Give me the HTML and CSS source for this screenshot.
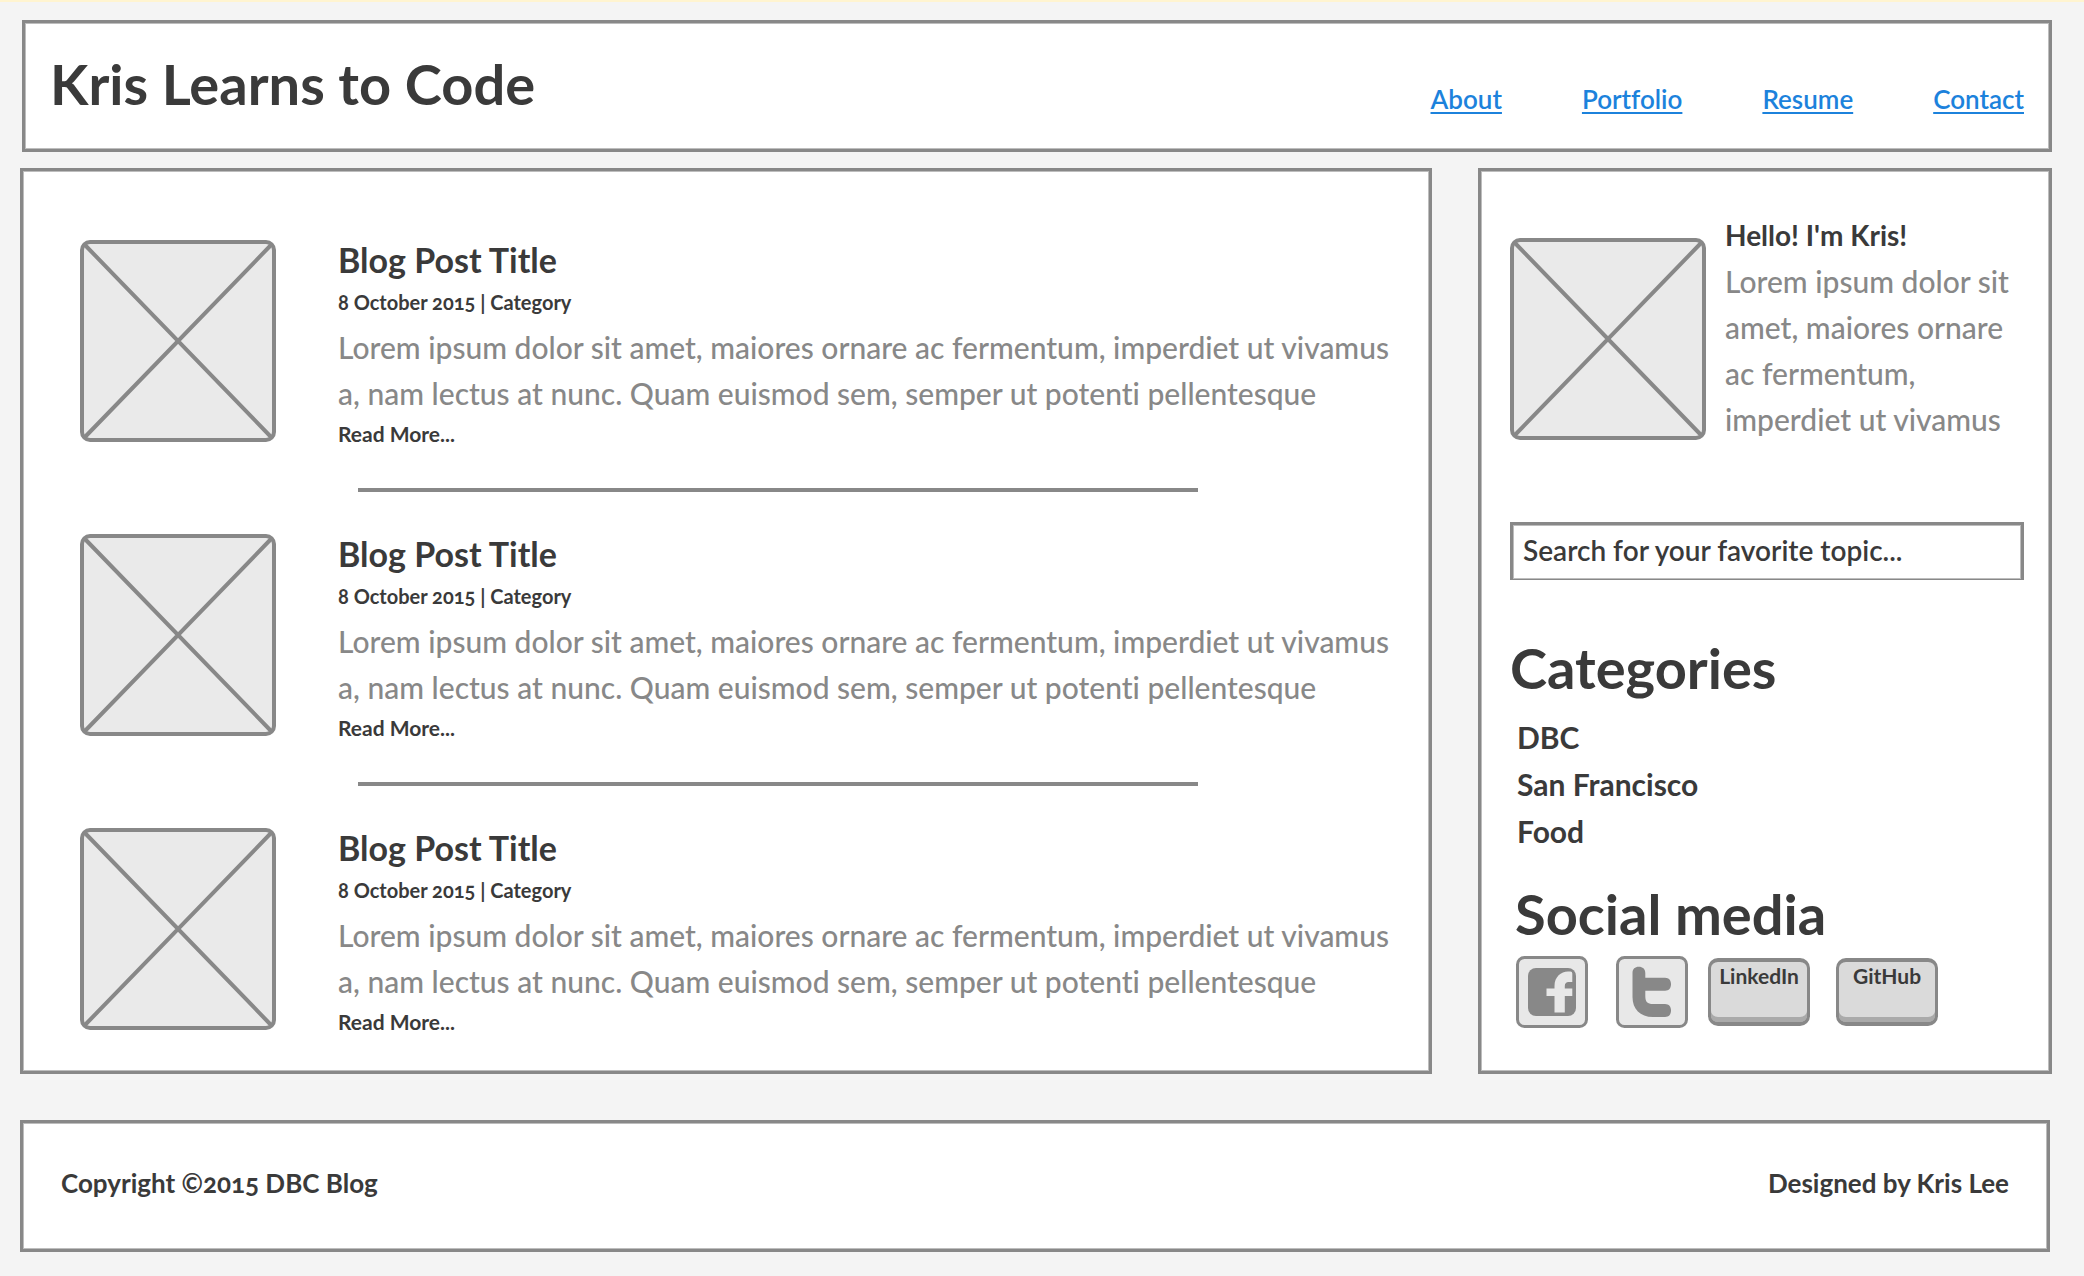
FILE: index.html
```html
<!DOCTYPE html>
<html lang="en">
<head>
<meta charset="utf-8">
<meta name="viewport" content="width=device-width, initial-scale=1">
<title>Kris Learns to Code</title>
<link rel="stylesheet" href="styles.css">
</head>
<body>
<div class="page">
  <header class="panel site-header">
    <h1 class="site-title">Kris Learns to Code</h1>
    <nav class="site-nav">
      <a href="#about">About</a>
      <a href="#portfolio">Portfolio</a>
      <a href="#resume">Resume</a>
      <a href="#contact">Contact</a>
    </nav>
  </header>

  <div class="columns">
    <main class="panel posts">
      <article class="post">
        <svg class="thumb" viewBox="0 0 196 202" preserveAspectRatio="none" role="img" aria-label="Post image"><rect x="2" y="2" width="192" height="198" rx="8"/><path d="M4 4L192 198M192 4L4 198"/></svg>
        <div>
          <h2 class="post-title">Blog Post Title</h2>
          <p class="post-meta">8 October 2015 | Category</p>
          <p class="copy">Lorem ipsum dolor sit amet, maiores ornare ac fermentum, imperdiet ut vivamus a, nam lectus at nunc. Quam euismod sem, semper ut potenti pellentesque</p>
          <a class="read-more" href="#post-1">Read More...</a>
        </div>
      </article>
      <hr class="divider">
      <article class="post">
        <svg class="thumb" viewBox="0 0 196 202" preserveAspectRatio="none" role="img" aria-label="Post image"><rect x="2" y="2" width="192" height="198" rx="8"/><path d="M4 4L192 198M192 4L4 198"/></svg>
        <div>
          <h2 class="post-title">Blog Post Title</h2>
          <p class="post-meta">8 October 2015 | Category</p>
          <p class="copy">Lorem ipsum dolor sit amet, maiores ornare ac fermentum, imperdiet ut vivamus a, nam lectus at nunc. Quam euismod sem, semper ut potenti pellentesque</p>
          <a class="read-more" href="#post-2">Read More...</a>
        </div>
      </article>
      <hr class="divider">
      <article class="post">
        <svg class="thumb" viewBox="0 0 196 202" preserveAspectRatio="none" role="img" aria-label="Post image"><rect x="2" y="2" width="192" height="198" rx="8"/><path d="M4 4L192 198M192 4L4 198"/></svg>
        <div>
          <h2 class="post-title">Blog Post Title</h2>
          <p class="post-meta">8 October 2015 | Category</p>
          <p class="copy">Lorem ipsum dolor sit amet, maiores ornare ac fermentum, imperdiet ut vivamus a, nam lectus at nunc. Quam euismod sem, semper ut potenti pellentesque</p>
          <a class="read-more" href="#post-3">Read More...</a>
        </div>
      </article>
    </main>

    <aside class="panel sidebar">
      <section class="bio">
        <svg class="thumb portrait" viewBox="0 0 196 202" preserveAspectRatio="none" role="img" aria-label="Portrait of Kris"><rect x="2" y="2" width="192" height="198" rx="8"/><path d="M4 4L192 198M192 4L4 198"/></svg>
        <div>
          <h2 class="bio-title">Hello! I'm Kris!</h2>
          <p class="copy">Lorem ipsum dolor sit amet, maiores ornare ac fermentum, imperdiet ut vivamus</p>
        </div>
      </section>
      <input class="search" type="search" aria-label="Search" placeholder="Search for your favorite topic...">
      <section>
        <h2 class="side-title">Categories</h2>
        <ul class="categories">
          <li><a href="#dbc">DBC</a></li>
          <li><a href="#san-francisco">San Francisco</a></li>
          <li><a href="#food">Food</a></li>
        </ul>
      </section>
      <section>
        <h2 class="side-title social-title">Social media</h2>
        <div class="social">
          <a class="social-icon" href="#facebook" aria-label="Facebook">
            <svg viewBox="0 0 72 72"><rect class="tile" x="1.5" y="1.5" width="69" height="69" rx="7"/><rect class="mark" x="12" y="12" width="48" height="48" rx="8"/><path class="cutout" d="M38.500 56.500V40H30.500V32.500H38.500V30C38.500 21 45 15.600 52 15.600H54.500Q56.300 15.600 56.300 17.500V26H52.500Q48.800 26.300 48.800 30V32.500H56.300V40H48.800V56.500Z"/></svg>
          </a>
          <a class="social-icon twitter" href="#twitter" aria-label="Twitter">
            <svg viewBox="0 0 72 72"><rect class="tile" x="1.5" y="1.5" width="69" height="69" rx="7"/><path class="mark" d="M16.500 17C16.500 13 19 10.800 22.800 10.800S29.300 13 29.300 17V21.700H49C53 21.700 55 24.500 55 28.200S53 34.700 49 34.700H29.300V40C29.300 46 31.500 48 37 48H49C53 48 55 50.800 55 54.500S53 61 49 61H37C24 61 16.500 53 16.500 41Z"/></svg>
          </a>
          <button class="key" type="button">LinkedIn</button>
          <button class="key github" type="button">GitHub</button>
        </div>
      </section>
    </aside>
  </div>

  <footer class="panel site-footer">
    <p>Copyright ©2015 DBC Blog</p>
    <p>Designed by Kris Lee</p>
  </footer>
</div>
</body>
</html>
```
FILE: styles.css
```css
:root {
  --ink: #3a3a3a;
  --grey: #888;
  --soft: #bdbdbd;
}

* { box-sizing: border-box; }

body {
  margin: 0;
  border-top: 2px solid #fff4d0;
  background: #f4f4f4;
  color: var(--ink);
  font-family: Lato, "Open Sans", sans-serif;
  font-weight: 700;
  font-variant-numeric: oldstyle-nums;
  font-variant-ligatures: none;
}

h1, h2, p, ul { margin: 0; padding: 0; }
ul { list-style: none; }
a { color: inherit; text-decoration: none; }

.page { padding: 18px 32px 24px 20px; }

.panel {
  border: 3px solid var(--grey);
  background: #fff;
  box-shadow: inset 0 0 0 1px var(--soft);
}

/* Header */
.site-header {
  display: flex;
  justify-content: space-between;
  align-items: flex-end;
  margin: 0 0 16px 2px;
  padding: 27px 25px 31px;
}
.site-title { font-size: 56px; line-height: 68px; }
.site-nav { display: flex; gap: 80px; }
.site-nav a {
  color: #1c82dc;
  font-size: 26px;
  font-weight: 600;
  line-height: 38px;
  text-decoration: underline 2px;
  text-underline-offset: 3px;
}

/* Two columns */
.columns {
  display: grid;
  grid-template-columns: 1412fr 574fr;
  gap: 46px;
}

.posts { padding: 69px 29px 31px 57px; }
.post {
  display: grid;
  grid-template-columns: 196px 1fr;
  column-gap: 62px;
}
.thumb {
  width: 196px;
  height: 202px;
  fill: #eaeaea;
  stroke: var(--grey);
  stroke-width: 4;
}
.post-title { font-size: 34px; line-height: 40px; }
.post-meta { font-size: 20px; line-height: 44px; }
.copy {
  color: var(--grey);
  font-size: 30px;
  font-weight: 500;
  line-height: 46px;
}
.read-more { display: block; font-size: 21px; line-height: 36px; }
.divider {
  height: 4px;
  margin: 36px 202px 42px 278px;
  border: 0;
  background: var(--grey);
}

/* Sidebar */
.sidebar { padding: 41px 25px 40px 29px; }
.bio {
  display: grid;
  grid-template-columns: 196px 1fr;
  column-gap: 19px;
}
.portrait { margin-top: 26px; }
.bio-title { font-size: 28px; line-height: 46px; }

.search {
  display: block;
  width: 100%;
  height: 58px;
  margin-top: 80px;
  padding: 0 10px 4px;
  border: 3px solid var(--grey);
  border-bottom-width: 1px;
  border-radius: 0;
  background: #fff;
  box-shadow: inset 0 0 0 1px var(--soft);
  color: var(--ink);
  font: 600 28px Lato, "Open Sans", sans-serif;
  appearance: none;
}
.search::placeholder { color: var(--ink); opacity: 1; }

.side-title { margin-top: 54px; font-size: 56px; line-height: 68px; }
.categories {
  margin-top: 12px;
  padding-left: 7px;
  font-size: 30px;
  line-height: 47px;
}
.social-title { margin-top: 25px; padding-left: 5px; }
.social {
  display: flex;
  align-items: center;
  margin-top: 8px;
  padding-left: 6px;
}
.social-icon { width: 72px; height: 72px; }
.social-icon svg { display: block; }
.twitter { margin: 0 20px 0 28px; }
.tile { fill: #e8e8e8; stroke: var(--grey); stroke-width: 3; }
.mark { fill: var(--grey); }
.cutout { fill: #e8e8e8; }

.key {
  width: 102px;
  padding: 2px 0 34px;
  border: 3px solid var(--grey);
  border-width: 4px 3px;
  border-radius: 10px;
  background: #dadada;
  box-shadow: inset 0 -5px 0 #aaa;
  color: var(--ink);
  font: 700 21px/24px Lato, "Open Sans", sans-serif;
}
.github { margin-left: 26px; }

/* Footer */
.site-footer {
  display: flex;
  justify-content: space-between;
  margin: 46px 2px 0 0;
  padding: 37px 38px 43px;
  font-size: 26px;
  line-height: 46px;
}
```
